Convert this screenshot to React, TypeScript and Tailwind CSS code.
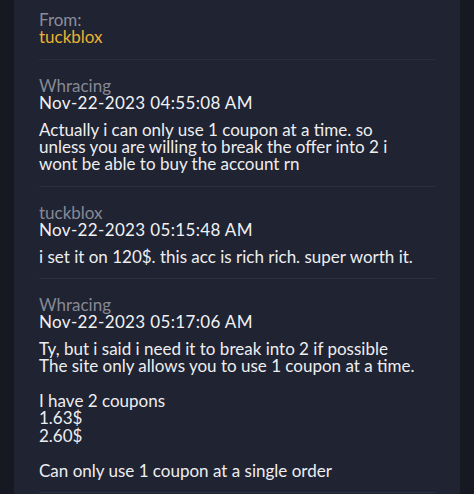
import React from "react";

type Msg = {
  author: string;
  date: string;
  lines: string[];
};

const messages: Msg[] = [
  {
    author: "Whracing",
    date: "Nov-22-2023 04:55:08 AM",
    lines: [
      "Actually i can only use 1 coupon at a time. so",
      "unless you are willing to break the offer into 2 i",
      "wont be able to buy the account rn",
    ],
  },
  {
    author: "tuckblox",
    date: "Nov-22-2023 05:15:48 AM",
    lines: ["i set it on 120$. this acc is rich rich. super worth it."],
  },
  {
    author: "Whracing",
    date: "Nov-22-2023 05:17:06 AM",
    lines: [
      "Ty, but i said i need it to break into 2 if possible",
      "The site only allows you to use 1 coupon at a time.",
      "",
      "I have 2 coupons",
      "1.63$",
      "2.60$",
      "",
      "Can only use 1 coupon at a single order",
    ],
  },
];

export default function App() {
  return (
    <div
      className="w-[474px] h-[494px] overflow-hidden bg-[#161922] px-[14px]"
      style={{ fontFamily: "Lato, 'Noto Sans', sans-serif" }}
    >
      <div className="h-full bg-[#1f2332] px-[25px] text-[17px] leading-[17.4px]">
        <div className="pt-[11px] pb-[13px] border-b border-[#2a2e3f]">
          <div className="text-[#8c8f9a]">From:</div>
          <div className="text-[#e9b233]">tuckblox</div>
        </div>
        {messages.map((m, i) => (
          <div key={i} className="pt-[17px] pb-[13px] border-b border-[#2a2e3f]">
            <div className="text-[#868995]">{m.author}</div>
            <div className="text-[#f2f2f4] tracking-[0.35px]">{m.date}</div>
            <div className="mt-[9px] text-[#eeeef0]">
              {m.lines.map((l, j) => (
                <div key={j} className="h-[17.4px] whitespace-nowrap">
                  {l}
                </div>
              ))}
            </div>
          </div>
        ))}
      </div>
    </div>
  );
}
